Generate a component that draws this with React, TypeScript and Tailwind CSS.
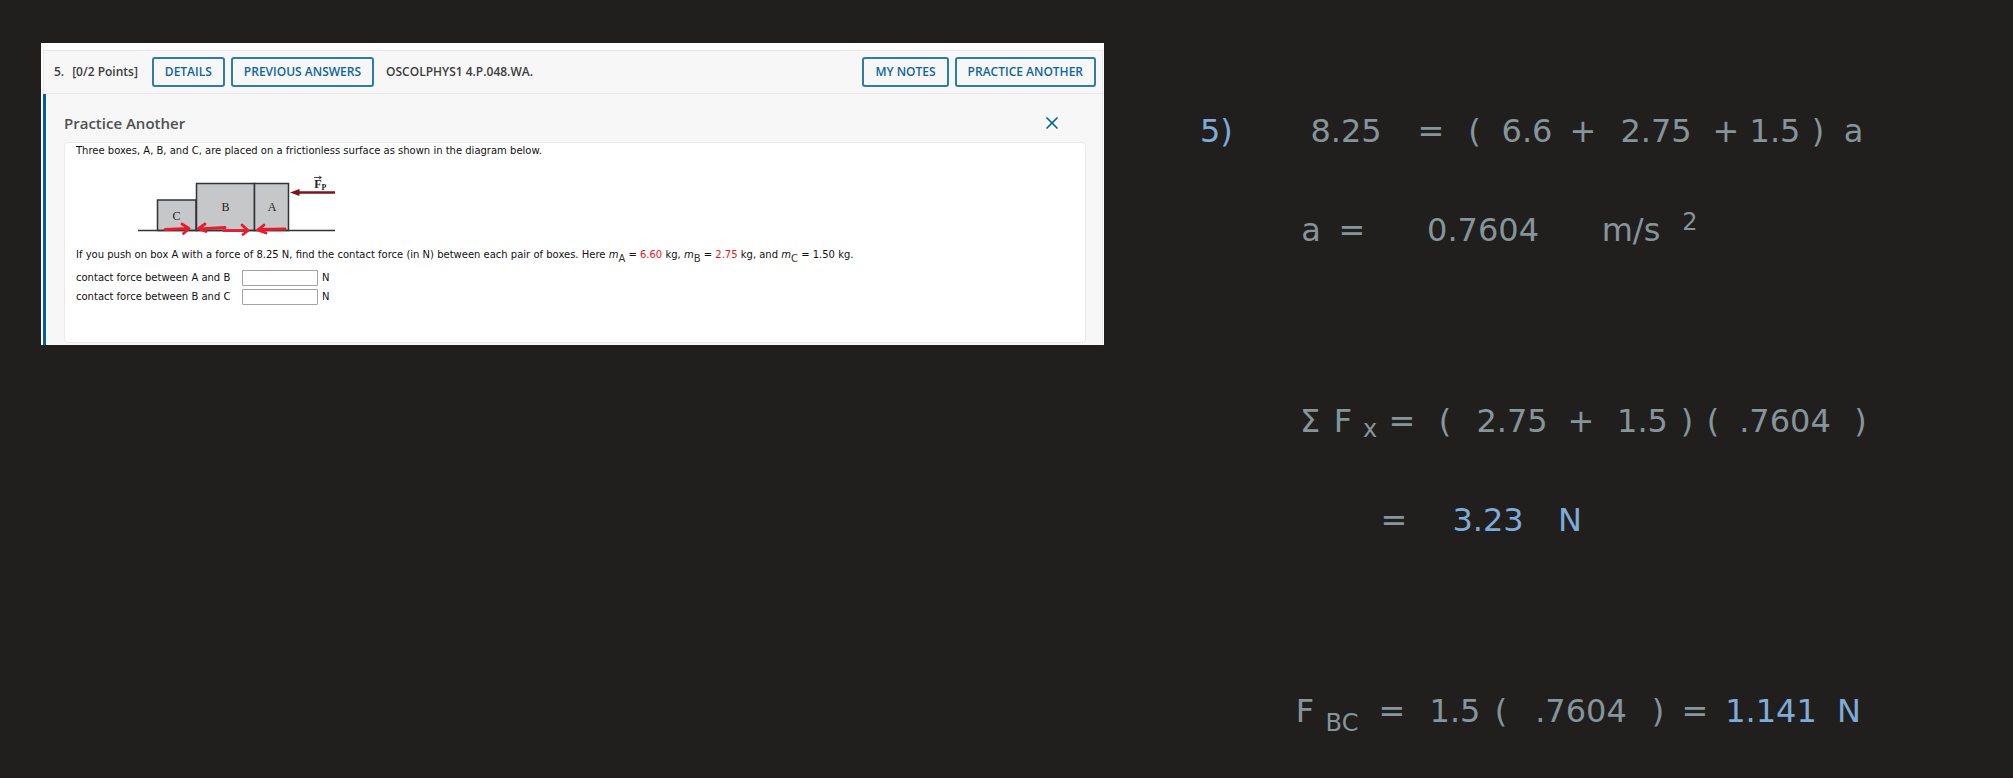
import type { ReactNode } from "react";
import { X } from "lucide-react";
import { twMerge } from "tailwind-merge";

function HeaderButton({ children }: { children: ReactNode }) {
  return (
    <button
      type="button"
      className="h-[30px] rounded-[3px] border-2 border-[#2f7bac] px-[11px] text-xs font-semibold leading-none whitespace-nowrap text-[#0d659f]"
    >
      {children}
    </button>
  );
}

function BoxDiagram() {
  return (
    <svg
      viewBox="130 170 215 70"
      className="mt-[11px] ml-[54px] h-[70px] w-[215px]"
      role="img"
      aria-label="Boxes C, B and A on a surface, pushed from the right"
    >
      <g fill="#c6c7c9" stroke="#333335" strokeWidth="1.5">
        <rect x="157.5" y="200" width="38.5" height="30.5" />
        <rect x="196.5" y="183.5" width="58" height="47" />
        <rect x="254.5" y="183.5" width="34" height="47" />
        <path d="M138 230.5H335" />
      </g>
      <g
        fill="#222"
        fontFamily="'Liberation Serif', serif"
        fontSize="12"
        textAnchor="middle"
      >
        <text x="176.5" y="220">C</text>
        <text x="225.5" y="211">B</text>
        <text x="272" y="211">A</text>
        <text x="318" y="188" fontWeight="bold">F</text>
        <text x="324" y="190" fontSize="8" fontWeight="bold">P</text>
      </g>
      <path d="M314 177.500H321M319 176L321.500 177.500L319 179" fill="none" stroke="#222" strokeWidth="0.8" />
      <path d="M298 192.500H335" stroke="#7d1416" strokeWidth="2.4" />
      <path d="M290 192.500L299.500 189V196Z" fill="#7d1416" />
      <g
        fill="none"
        stroke="#e81c2e"
        strokeWidth="2.8"
        strokeLinecap="round"
        strokeLinejoin="round"
      >
        <path d="M165 229.500L188 228.500M182 224L189 228.500L183.500 233.500" />
        <path d="M225 227.500L199 228.800M205 224L198.500 228.500L206 231.500" />
        <path d="M224 230.700L247 230.500M242 225L248 230.500L243 234.500" />
        <path d="M285 229L259 229.500M264 225L257.500 230L266 233" />
      </g>
    </svg>
  );
}

function AnswerRow({ id, label }: { id: string; label: string }) {
  return (
    <div className="flex h-[19px] items-center">
      <label htmlFor={id} className="w-[166px]">
        {label}
      </label>
      <input
        id={id}
        type="text"
        className="h-4 w-[76px] rounded-[1px] border border-[#a3a3a3] bg-white px-1"
      />
      <span className="ml-1">N</span>
    </div>
  );
}

function Mass({ sub }: { sub: string }) {
  return (
    <>
      <i>m</i>
      <sub className="-bottom-1 text-[10px] text-[#333]">{sub}</sub>
    </>
  );
}

function QuestionCard() {
  return (
    <section className="bg-white pt-[7px] pr-px pl-[2px] font-['Open_Sans',sans-serif]">
      <header className="flex h-11 items-center border border-[#e9e9e9] bg-[#f7f7f7] pr-[6px] pl-[10px] text-xs font-semibold text-[#3c3c3c]">
        <span>5.</span>
        <span className="ml-2">[0/2 Points]</span>
        <div className="ml-[14px] flex gap-[6px]">
          <HeaderButton>DETAILS</HeaderButton>
          <HeaderButton>PREVIOUS ANSWERS</HeaderButton>
        </div>
        <span className="ml-3">OSCOLPHYS1 4.P.048.WA.</span>
        <div className="ml-auto flex gap-[6px]">
          <HeaderButton>MY NOTES</HeaderButton>
          <HeaderButton>PRACTICE ANOTHER</HeaderButton>
        </div>
      </header>

      <div className="border-r border-l-[3px] border-r-[#e9e9e9] border-l-[#00629b] bg-[#f7f7f7] pt-[17px] pr-4 pb-[2px] pl-[18px]">
        <div className="flex h-6 items-center justify-between pr-6">
          <h2 className="text-[15px] font-semibold text-[#505050]">Practice Another</h2>
          <button type="button" aria-label="Close" className="text-[#00629b]">
            <X size={20} strokeWidth={2} />
          </button>
        </div>
        <div className="mt-[7px] rounded border border-[#ebebeb] bg-white pb-9 pl-[11px] font-['DejaVu_Sans',sans-serif] text-[10px] leading-4 text-[#111]">
          <p>
            Three boxes, A, B, and C, are placed on a frictionless surface as
            shown in the diagram below.
          </p>
          <BoxDiagram />
          <p className="mt-[7px]">
            If you push on box A with a force of 8.25 N, find the contact force
            (in N) between each pair of boxes. Here <Mass sub="A" /> ={" "}
            <span className="text-[#e8141c]">6.60</span> kg, <Mass sub="B" /> ={" "}
            <span className="text-[#e8141c]">2.75</span> kg, and{" "}
            <Mass sub="C" /> = 1.50 kg.
          </p>
          <div className="mt-[5px]">
            <AnswerRow id="force-ab" label="contact force between A and B" />
            <AnswerRow id="force-bc" label="contact force between B and C" />
          </div>
        </div>
      </div>
    </section>
  );
}

function Equation({ className, children }: { className: string; children: ReactNode }) {
  return (
    <div className={twMerge("grid h-10 items-center text-center", className)}>{children}</div>
  );
}

function Notes() {
  return (
    <section className="grid grid-cols-[90fr_590fr] pt-[68px] font-['DejaVu_Sans',sans-serif] text-[32px] leading-10 text-[#85959a]">
      <div className="text-[#7fabd9]">5)</div>
      <div className="flex flex-col gap-[151px]">
        <div className="flex flex-col gap-[59px]">
          <Equation className="grid-cols-[112fr_58fr_29fr_76fr_36fr_110fr_30fr_68fr_18fr_53fr]">
            <span>8.25</span>
            <span>=</span>
            <span>(</span>
            <span>6.6</span>
            <span>+</span>
            <span>2.75</span>
            <span>+</span>
            <span>1.5</span>
            <span>)</span>
            <span>a</span>
          </Equation>
          <Equation className="grid-cols-[42fr_40fr_222fr_74fr_44fr_168fr]">
            <span>a</span>
            <span>=</span>
            <span>0.7604</span>
            <span>m/s</span>
            <sup className="-top-2 text-2xl">2</sup>
          </Equation>
        </div>

        <div className="flex flex-col gap-[59px]">
          <Equation className="grid-cols-[40fr_26fr_28fr_36fr_50fr_84fr_54fr_69fr_20fr_32fr_112fr_39fr]">
            <span>Σ</span>
            <span>F</span>
            <sub className="-bottom-2 text-2xl">x</sub>
            <span>=</span>
            <span>(</span>
            <span>2.75</span>
            <span>+</span>
            <span>1.5</span>
            <span>)</span>
            <span>(</span>
            <span>.7604</span>
            <span>)</span>
          </Equation>
          <Equation className="grid-cols-[72fr_64fr_124fr_40fr_290fr]">
            <span className="col-start-2">=</span>
            <span className="text-[#7fabd9]">3.23</span>
            <span className="text-[#7fabd9]">N</span>
          </Equation>
        </div>

        <Equation className="grid-cols-[30fr_44fr_56fr_70fr_22fr_138fr_16fr_58fr_94fr_62fr]">
          <span>F</span>
          <sub className="-bottom-3 text-2xl">BC</sub>
          <span>=</span>
          <span>1.5</span>
          <span>(</span>
          <span>.7604</span>
          <span>)</span>
          <span>=</span>
          <span className="text-[#7fabd9]">1.141</span>
          <span className="text-[#7fabd9]">N</span>
        </Equation>
      </div>
    </section>
  );
}

export default function App() {
  return (
    <main className="grid min-h-screen grid-cols-[1063fr_680fr] items-start gap-24 border-b border-[#2a1519] bg-[#211f1e] pt-[43px] pr-[133px] pl-[41px]">
      <QuestionCard />
      <Notes />
    </main>
  );
}
